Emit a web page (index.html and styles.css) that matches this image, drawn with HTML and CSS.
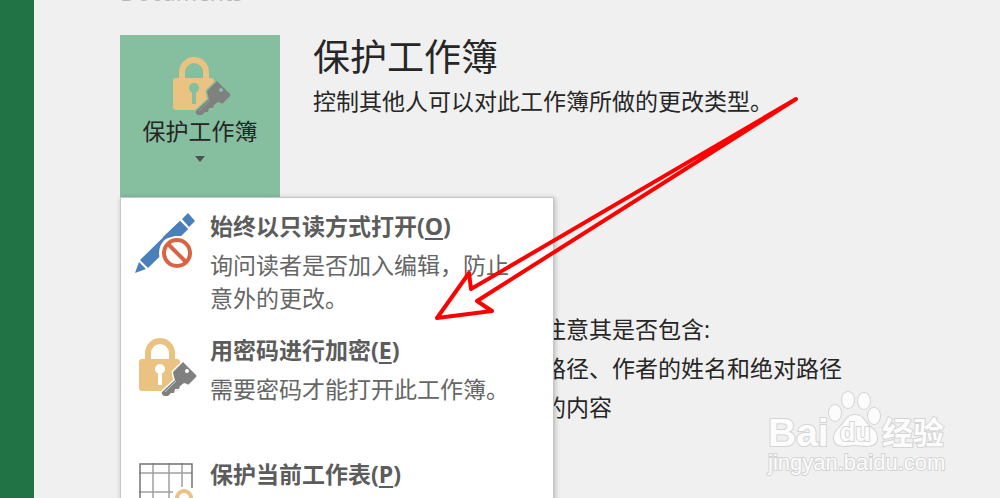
FILE: index.html
```html
<!DOCTYPE html>
<html lang="zh-CN">
<head>
<meta charset="UTF-8">
<meta name="viewport" content="width=device-width, initial-scale=1.0">
<title>保护工作簿</title>
<link rel="stylesheet" href="styles.css">
</head>
<body>
<svg class="defs" aria-hidden="true">
    <!-- padlock with key, the gaps take the background through currentColor -->
    <symbol id="lock" viewBox="-4 -2 62 60" overflow="visible">
        <path d="M9 23V15a12 12 0 0 1 24 0v8" fill="none" stroke="#eac282" stroke-width="6"/>
        <rect x="0" y="21" width="41" height="32" rx="3" fill="#eac282"/>
        <circle cx="21" cy="31" r="5" fill="currentColor"/>
        <path d="M21 32v15" stroke="currentColor" stroke-width="4"/>
        <path d="M44 24l13 13q1 1 0 2l-7 7q-1 1-2 0l-3-1-4 3-1 3-4 0-1 4-3 0-3 3-4 0q-3-2-2-4l13-12-1-3-1-5z" fill="#808080" stroke="currentColor" stroke-width="3" stroke-linejoin="round" paint-order="stroke"/>
        <circle cx="48" cy="33" r="2" fill="currentColor"/>
        <path d="M37 43L26 54" stroke="currentColor" stroke-width="1" opacity="0.6"/>
    </symbol>
</svg>

<nav class="sidebar"></nav>

<main class="info">
    <p class="path">Documents</p>
    <section class="protect">
        <div class="dropdown">
            <button class="tile" type="button" aria-haspopup="menu" aria-expanded="true">
                <svg class="icon" aria-hidden="true"><use href="#lock"/></svg>
                <span>保护工作簿</span>
                <span class="caret"></span>
            </button>
            <div class="menu" role="menu">
                <button class="item" type="button" role="menuitem">
                    <svg class="icon" viewBox="0 0 62 60" aria-hidden="true">
                        <path d="M53 1l7 8-6 6-7-8zM45 9l8 8L13 56l-8-8zM4 50l7 7-11 4z" fill="#4a80b9"/>
                        <circle cx="42" cy="41" r="18" fill="#fff"/>
                        <path d="M45 9l8 8-7 7h-6l-7 2-5 2v-3z" fill="#4a80b9"/>
                        <circle cx="42" cy="41" r="13" fill="none" stroke="#d96443" stroke-width="4"/>
                        <path d="M33 32l18 18" stroke="#d96443" stroke-width="4"/>
                    </svg>
                    <span class="text">
                        <span class="name">始终以只读方式打开(<u>O</u>)</span>
                        <span class="note">询问读者是否加入编辑，防止意外的更改。</span>
                    </span>
                </button>
                <button class="item" type="button" role="menuitem">
                    <svg class="icon" aria-hidden="true"><use href="#lock"/></svg>
                    <span class="text">
                        <span class="name">用密码进行加密(<u>E</u>)</span>
                        <span class="note">需要密码才能打开此工作簿。</span>
                    </span>
                </button>
                <button class="item" type="button" role="menuitem">
                    <svg class="icon" viewBox="-4 -3 62 60" aria-hidden="true">
                        <path d="M14 0v52M30 0v52M43 0v24M0 10h53M0 29h34" fill="none" stroke="#a0a0a0" stroke-width="1.5"/>
                        <path d="M53 25V1H1v51h33" fill="none" stroke="#737373" stroke-width="1.5"/>
                        <path d="M38 42v-7a7 7 0 0 1 14 0v7" fill="none" stroke="#eac282" stroke-width="4"/>
                        <rect x="34" y="40" width="22" height="16" fill="#eac282"/>
                    </svg>
                    <span class="text">
                        <span class="name">保护当前工作表(<u>P</u>)</span>
                    </span>
                </button>
            </div>
        </div>
        <div class="details">
            <h1>保护工作簿</h1>
            <p>控制其他人可以对此工作簿所做的更改类型。</p>
            <div class="inspect">
                <p>注意其是否包含:</p>
                <p>路径、作者的姓名和绝对路径</p>
                <p>的内容</p>
            </div>
        </div>
    </section>
</main>

<svg class="arrow" viewBox="430 92 372 232" aria-hidden="true">
    <path d="M796 99L471 289l-2-16-32 45 55-7-15-10z"/>
</svg>

<svg class="watermark" viewBox="0 0 190 95" role="img" aria-label="Baidu 经验">
    <ellipse cx="75" cy="28" rx="6" ry="8"/>
    <ellipse cx="88" cy="15" rx="6" ry="8"/>
    <ellipse cx="104" cy="16" rx="6" ry="8"/>
    <ellipse cx="114" cy="31" rx="6" ry="8"/>
    <path d="M95 30c-7 0-9 5-13 10-4 4-8 7-8 13 0 6 5 8 11 8 4 0 6-1 10-1s7 1 11 1c6 0 11-2 11-8 0-6-4-9-9-13-4-5-6-10-13-10z"/>
    <text class="bai" x="8" y="61">Bai</text>
    <text class="du" x="80" y="56">du</text>
    <text class="jingyan" x="122" y="59">经验</text>
    <text class="site" x="8" y="85">jingyan.baidu.com</text>
</svg>
</body>
</html>
```

FILE: styles.css
```css
body {
    font-family: "Open Sans", "Noto Sans CJK SC", sans-serif;
    font-size: 23px;
    line-height: 33px;
    color: #262626;
    background-color: #f0f0f0;
    display: flex;
    height: 100vh;
    margin: 0;
    overflow: hidden;
    position: relative;
}
h1,
p {
    margin: 0;
    font-weight: 400;
}
button {
    font: inherit;
    border: 0;
    cursor: pointer;
}
.defs {
    position: absolute;
    width: 0;
    height: 0;
}
.sidebar {
    flex: none;
    width: 34px;
    background-color: #217346;
}
.info {
    flex: 1;
    padding-left: 86px;
}
.path {
    height: 33px;
    margin-top: -24px;
    margin-bottom: 26px;
    color: #b8b8b8;
}
.protect {
    display: flex;
    gap: 33px;
}
.dropdown {
    flex: none;
    position: relative;
    width: 160px;
}
.icon {
    flex: none;
    display: block;
    width: 62px;
    height: 60px;
    overflow: visible;
}
.tile {
    display: flex;
    flex-direction: column;
    align-items: center;
    width: 100%;
    height: 162px;
    padding: 20px 0 0;
    background-color: #86bfa0;
    color: #262626;
}
.tile .icon {
    color: #86bfa0;
}
.caret {
    margin-top: 8px;
    border: 5px solid transparent;
    border-top: 6px solid #505050;
    border-bottom: 0;
}
.menu {
    position: absolute;
    top: 162px;
    left: 0;
    z-index: 1;
    width: 432px;
    background-color: #fff;
    border: 1px solid #c6c6c6;
    box-shadow: 1px 1px 5px rgba(0, 0, 0, 0.25);
}
.item {
    display: flex;
    align-items: flex-start;
    gap: 13px;
    width: 100%;
    min-height: 124px;
    padding: 12px 32px 6px 14px;
    background-color: #fff;
    color: #666;
    text-align: left;
}
.item .icon {
    margin-top: 2px;
    color: #fff;
}
.text {
    display: flex;
    flex-direction: column;
    gap: 6px;
}
.name {
    font-weight: 700;
    color: #5c5c5c;
}
.name u {
    text-underline-offset: 3px;
}
.details h1 {
    font-size: 37px;
    line-height: 44px;
    margin-bottom: 6px;
}
.inspect {
    display: flex;
    flex-direction: column;
    gap: 6px;
    margin-top: 195px;
    margin-left: 230px;
}
.arrow {
    position: absolute;
    top: 92px;
    left: 430px;
    z-index: 2;
    width: 372px;
    height: 232px;
    fill: none;
    stroke: #f00;
    stroke-width: 4;
    stroke-linejoin: round;
}
.watermark {
    position: absolute;
    right: 50px;
    bottom: 18px;
    width: 190px;
    height: 95px;
    fill: #fcfcfc;
    stroke: #d4d4d4;
    stroke-width: 2;
    paint-order: stroke;
    font-family: "Liberation Sans", "Noto Sans CJK SC", sans-serif;
}
.bai {
    font-size: 39px;
    font-weight: 700;
}
.du {
    font-size: 25px;
    font-weight: 700;
}
.jingyan {
    font-size: 31px;
    font-weight: 700;
}
.site {
    font-size: 22px;
}
```
